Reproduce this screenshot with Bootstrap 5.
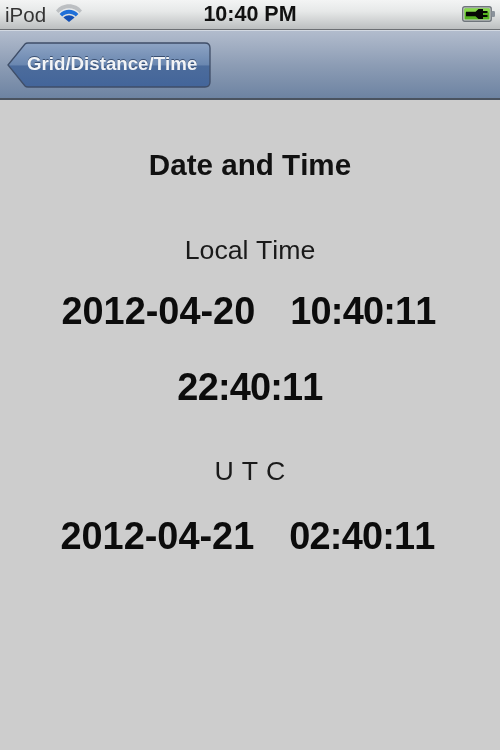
<!DOCTYPE html>
<html lang="en">
<head>
<meta charset="utf-8">
<link rel="stylesheet" href="https://cdn.jsdelivr.net/npm/bootstrap@5.3.0/dist/css/bootstrap.min.css">
<style>
html, body { width: 500px; height: 750px; overflow: hidden; }
body { background: #cdcdcd; font-family: "Liberation Sans", Arial, sans-serif; color: #111; font-kerning: none; }
.statusbar { height: 30px; background: linear-gradient(#f3f4f4, #e6e8e8 40%, #bcbfc0); border-bottom: 1px solid #6c6f73; padding: 0 5px 0 5px; position: relative; }
.carrier { font-size: 20.5px; color: #333; line-height: 30px; width: 41px; }
.wifi-ic { margin-left: 10px; margin-bottom: 4px; }
.batt-ic { margin-bottom: 2px; }
.clock { font-size: 21.5px; font-weight: 700; color: #111; left: 0; right: 0; text-align: center; position: absolute; top: 0; line-height: 28px; }
.navzone { height: 70px; background: linear-gradient(#b2bccd, #8d9db5 50%, #6d83a2); border-top: 1px solid #d3d9e2; border-bottom: 2px solid #4a5360; padding-left: 7px; }
.backbtn { height: 46px; width: 204px; position: relative; }
.backbtn svg { position: absolute; inset: 0; }
.backlabel { position: relative; color: #f2f4f7; font-weight: 700; font-size: 18.7px; padding-left: 20px; line-height: 44px; text-shadow: 0 -1px 0 #3a4f70; white-space: nowrap; }
.maintitle { font-size: 29.6px; font-weight: 700; margin-top: 49px; line-height: 32px; }
.lbl { font-size: 26.7px; line-height: 30px; color: #1a1a1a; }
.lbl-local { margin-top: 54px; }
.lbl-utc { margin-top: 48px; letter-spacing: .3px; }
.big { font-size: 37.9px; font-weight: 700; line-height: 42px; color: #0c0c0c; }
.tm { letter-spacing: -.8px; }
.row-a { margin-top: 25px; gap: 35px; padding-right: 3px; }
.row-b { margin-top: 34px; }
.row-c { margin-top: 29px; gap: 35px; padding-right: 5px; }
main, .backlabel, .clock, .carrier { filter: blur(.35px); }
</style>
</head>
<body>
<div class="statusbar d-flex align-items-center">
  <span class="carrier">iPod</span>
  <svg class="wifi-ic" width="26" height="18" viewBox="0 0 26 18"><path d="M0 6.500 C6 -2 20 -2 26 6.500 L23.600 9 C18 2.600 8 2.600 2.400 9 Z" fill="#bcbfc2"/><path d="M3.600 10 C9 4.400 17 4.400 22.400 10 L19.800 12.600 C16 8.800 10 8.800 6.200 12.600 Z" fill="#1f6fd8"/><path d="M7.400 13.600 C11 10.600 15 10.600 18.600 13.600 L13 18 Z" fill="#1450b4"/></svg>
  <span class="clock">10:40 PM</span>
  <svg class="batt-ic ms-auto" width="33" height="16" viewBox="0 0 33 16"><rect x="0.7" y="0.7" width="28.500" height="14.600" rx="2" fill="#d4d8d4" stroke="#6f757b" stroke-width="1.400"/><rect x="2.500" y="2.500" width="25" height="11" fill="#55b31f"/><rect x="2.500" y="2.500" width="25" height="4" fill="#86d84a"/><rect x="29.500" y="5" width="3.500" height="6" rx="1.200" fill="#8a929b"/><path d="M4 5.700h9.500l3-2.700h4.500v2h4.500v2H21v2h4.500v2H21v2h-4.500l-3-2.700H4z" fill="#070905"/></svg>
</div>
<div class="navzone d-flex align-items-center">
  <div class="backbtn">
    <svg width="204" height="46" viewBox="0 0 204 46"><defs><linearGradient id="bg1" x1="0" y1="0" x2="0" y2="1"><stop offset="0" stop-color="#8ea4c4"/><stop offset="0.5" stop-color="#6a87b0"/><stop offset="0.52" stop-color="#4c6c9c"/><stop offset="1" stop-color="#43659a"/></linearGradient></defs><path d="M1 23 L18 2 Q19 1 21 1 H198 Q203 1 203 6 V40 Q203 45 198 45 H21 Q19 45 18 44 Z" fill="url(#bg1)" stroke="#3f4e68" stroke-width="1.300"/></svg>
    <div class="backlabel">Grid/Distance/Time</div>
  </div>
</div>
<main class="text-center">
  <div class="maintitle">Date and Time</div>
  <div class="lbl lbl-local">Local Time</div>
  <div class="big d-flex justify-content-center row-a"><span>2012-04-20</span><span class="tm">10:40:11</span></div>
  <div class="big tm row-b">22:40:11</div>
  <div class="lbl lbl-utc">U T C</div>
  <div class="big d-flex justify-content-center row-c"><span>2012-04-21</span><span class="tm">02:40:11</span></div>
</main>
</body>
</html>
